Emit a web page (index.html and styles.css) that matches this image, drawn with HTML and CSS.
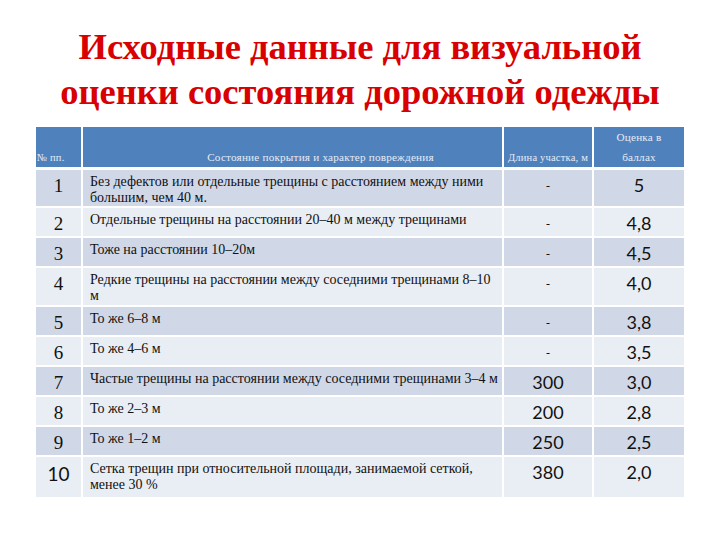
FILE: index.html
```html
<!DOCTYPE html>
<html lang="ru">
<head>
<meta charset="utf-8">
<link rel="stylesheet" href="styles.css">
</head>
<body>
<h1 class="title">Исходные данные для визуальной<br>оценки состояния дорожной одежды</h1>
<table class="grid">
  <colgroup>
    <col class="c-num"><col class="c-desc"><col class="c-len"><col class="c-score">
  </colgroup>
  <thead>
    <tr>
      <th class="h-num">№ пп.</th>
      <th class="h-desc">Состояние покрытия и характер повреждения</th>
      <th class="h-len">Длина участка, м</th>
      <th class="h-score"><span class="h-top">Оценка в</span><span class="h-bot">баллах</span></th>
    </tr>
  </thead>
  <tbody>
    <tr class="r-odd r-tall"><td class="num">1</td><td class="desc">Без дефектов или отдельные трещины с расстоянием между ними большим, чем 40 м.</td><td class="len">-</td><td class="score">5</td></tr>
    <tr class="r-even"><td class="num">2</td><td class="desc">Отдельные трещины на расстоянии 20–40 м между трещинами</td><td class="len">-</td><td class="score">4,8</td></tr>
    <tr class="r-odd"><td class="num">3</td><td class="desc">Тоже на расстоянии 10–20м</td><td class="len">-</td><td class="score">4,5</td></tr>
    <tr class="r-even r-tall"><td class="num">4</td><td class="desc">Редкие трещины на расстоянии между соседними трещинами 8–10 м</td><td class="len">-</td><td class="score">4,0</td></tr>
    <tr class="r-odd"><td class="num">5</td><td class="desc">То же 6–8 м</td><td class="len">-</td><td class="score">3,8</td></tr>
    <tr class="r-even"><td class="num">6</td><td class="desc">То же 4–6 м</td><td class="len">-</td><td class="score">3,5</td></tr>
    <tr class="r-odd"><td class="num">7</td><td class="desc">Частые трещины на расстоянии между соседними трещинами 3–4 м</td><td class="len val">300</td><td class="score">3,0</td></tr>
    <tr class="r-even"><td class="num">8</td><td class="desc">То же 2–3 м</td><td class="len val">200</td><td class="score">2,8</td></tr>
    <tr class="r-odd"><td class="num">9</td><td class="desc">То же 1–2 м</td><td class="len val">250</td><td class="score">2,5</td></tr>
    <tr class="r-even r-last"><td class="num sans">10</td><td class="desc">Сетка трещин при относительной площади, занимаемой сеткой, менее 30 %</td><td class="len val">380</td><td class="score">2,0</td></tr>
  </tbody>
</table>
</body>
</html>
```

FILE: styles.css
```css
html, body {
  margin: 0;
  padding: 0;
  background: #ffffff;
}
body {
  width: 720px;
  height: 540px;
  overflow: hidden;
  font-family: "Liberation Serif", "Times New Roman", "DejaVu Serif", serif;
}
.title {
  margin: 0;
  padding-top: 24px;
  height: 103px;
  box-sizing: border-box;
  text-align: center;
  color: #d80000;
  font-family: "Liberation Serif", "Times New Roman", "DejaVu Serif", serif;
  font-weight: bold;
  font-size: 36.5px;
  line-height: 45px;
}
.grid {
  margin-left: 36px;
  margin-top: 24px;
  width: 648px;
  table-layout: fixed;
  border-collapse: collapse;
}
.c-num { width: 46px; }
.c-desc { width: 421px; }
.c-len { width: 90px; }
.c-score { width: 91px; }

.grid th {
  background: #4f81bd;
  color: #e4ebf6;
  font-weight: normal;
  font-size: 10.5px;
  letter-spacing: 0.2px;
  height: 41px;
  padding: 0 0 4px;
  vertical-align: bottom;
  border-left: 2px solid #ffffff;
  border-bottom: 3px solid #ffffff;
  box-sizing: border-box;
  white-space: nowrap;
}
.grid th:first-child { border-left: none; text-align: left; padding-left: 1px; }
.grid th.h-desc {
  text-align: center;
  font-size: 11.2px;
  padding-left: 56px;
}
.grid th.h-score { font-size: 11.2px; }
.h-top, .h-bot { display: block; text-align: center; }
.h-top { margin-bottom: 8px; }

.grid td {
  border-left: 2px solid #ffffff;
  border-bottom: 2px solid #ffffff;
  vertical-align: top;
  box-sizing: border-box;
  color: #111111;
}
.grid td:first-child { border-left: none; }
.r-odd td { background: #d0d8e8; height: 30px; }
.r-even td { background: #e9edf4; height: 30px; }
.r-tall td { height: 39px; }
.r-last td { height: 41px; border-bottom: none; }

.num {
  text-align: center;
  font-family: "Liberation Serif", "Times New Roman", "DejaVu Serif", serif;
  font-size: 19px;
  padding-top: 5px;
}
.num.sans {
  font-family: Lato, "Open Sans", sans-serif;
}
.desc {
  font-size: 14px;
  line-height: 16px;
  padding: 4px 1px 0 7px;
}
.len {
  text-align: center;
  font-size: 12px;
  color: #555555;
  padding-top: 9px;
}
.len.val {
  font-family: Lato, "Open Sans", sans-serif;
  font-size: 18px;
  color: #111111;
  padding-top: 4px;
}
.score {
  text-align: center;
  font-family: Lato, "Open Sans", sans-serif;
  font-size: 18px;
  padding-top: 4px;
}
```
